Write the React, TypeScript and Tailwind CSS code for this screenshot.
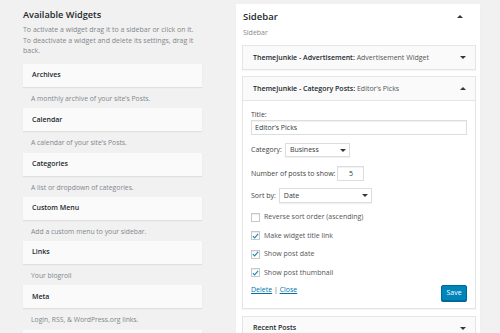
import React from "react";

const widgets = [
  { name: "Archives", desc: "A monthly archive of your site\u2019s Posts." },
  { name: "Calendar", desc: "A calendar of your site\u2019s Posts." },
  { name: "Categories", desc: "A list or dropdown of categories." },
  { name: "Custom Menu", desc: "Add a custom menu to your sidebar." },
  { name: "Links", desc: "Your blogroll" },
  { name: "Meta", desc: "Login, RSS, & WordPress.org links." },
  { name: "Pages", desc: "A list of your site\u2019s Pages." },
];

function Arrow({ up }: { up?: boolean }) {
  return up ? (
    <div className="w-0 h-0 border-l-[3px] border-r-[3px] border-b-[3px] border-l-transparent border-r-transparent border-b-[#32373c]" />
  ) : (
    <div className="w-0 h-0 border-l-[3px] border-r-[3px] border-t-[3px] border-l-transparent border-r-transparent border-t-[#32373c]" />
  );
}

function Check({ checked, label }: { checked?: boolean; label: string }) {
  return (
    <div className="flex items-center h-[18.5px]">
      <div className="w-[9px] h-[9px] border border-[#c8c8c8] bg-white shadow-[inset_0_1px_1px_rgba(0,0,0,0.08)] flex items-center justify-center">
        {checked && (
          <svg width="8" height="8" viewBox="0 0 8 8">
            <path d="M1 4.2 L3 6.2 L7 1.6" fill="none" stroke="#1e8cbe" strokeWidth="1.4" />
          </svg>
        )}
      </div>
      <span className="ml-[4px] text-[7px] leading-[10px] text-[#555]">{label}</span>
    </div>
  );
}

function WidgetHeader({ title, sub, up }: { title: string; sub: string; up?: boolean }) {
  return (
    <div className="h-[23px] flex items-center justify-between pl-[10px] pr-[9px]">
      <div className="text-[7px] leading-[10px] text-[#23282d]">
        <span className="font-semibold">{title}</span>
        {sub && <span className="text-[#555]"> {sub}</span>}
      </div>
      <Arrow up={up} />
    </div>
  );
}

export default function App() {
  return (
    <div
      className="w-[500px] h-[333px] overflow-hidden bg-[#f1f1f1] flex items-start"
      style={{ fontFamily: '"Open Sans", "Liberation Sans", sans-serif' }}
    >
      <div className="ml-[23px] w-[179px] pt-[9px]">
        <h2 className="text-[9.2px] leading-[12px] font-semibold text-[#23282d]">Available Widgets</h2>
        <p className="mt-[4px] text-[7px] leading-[10.5px] text-[#82878c]">
          To activate a widget drag it to a sidebar or click on it.
          <br />
          To deactivate a widget and delete its settings, drag it back.
        </p>
        <div className="mt-[7.5px] flex flex-col">
          {widgets.map((w) => (
            <div key={w.name}>
              <div className="h-[23px] bg-[#fafafa] shadow-[0_1px_1px_rgba(0,0,0,0.07)] flex items-center pl-[9px] text-[7px] font-semibold text-[#23282d]">
                {w.name}
              </div>
              <div className="h-[21.3px] pt-[7px] pl-[8px] text-[6.8px] leading-[10px] text-[#82878c]">{w.desc}</div>
            </div>
          ))}
        </div>
      </div>

      <div className="ml-[34px] mt-[4px] w-[244px] h-[340px] bg-white shadow-[0_1px_1px_rgba(0,0,0,0.06)] pl-[6px] pr-[4px]">
        <div className="flex items-start justify-between pt-[6px] pl-[1px] pr-[13px]">
          <div className="text-[9.5px] leading-[14px] font-semibold text-[#23282d]">Sidebar</div>
          <div className="mt-[4.5px]">
            <Arrow up />
          </div>
        </div>
        <div className="mt-[4px] pl-[1px] text-[7px] leading-[10px] text-[#888]">Sidebar</div>

        <div className="mt-[7px] bg-[#fafafa] border border-[#e5e5e5] shadow-[0_1px_1px_rgba(0,0,0,0.04)]">
          <WidgetHeader title="ThemeJunkie - Advertisement:" sub="Advertisement Widget" />
        </div>

        <div className="mt-[6px] border border-[#e5e5e5] shadow-[0_1px_1px_rgba(0,0,0,0.04)]">
          <div className="bg-[#fafafa] border-b border-[#e5e5e5]">
            <WidgetHeader title="ThemeJunkie - Category Posts:" sub={"Editor\u2019s Picks"} up />
          </div>
          <div className="bg-white pl-[8px] pr-[8px] pt-[9px] pb-[7px] text-[7px] text-[#444]">
            <div className="leading-[10px]">Title:</div>
            <div className="h-[15px] border border-[#ddd] shadow-[inset_0_1px_1px_rgba(0,0,0,0.06)] flex items-center pl-[3px] leading-[10px] text-[#32373c]">
              Editor’s Picks
            </div>

            <div className="mt-[8px] flex items-center h-[14px]">
              <span className="leading-[10px]">Category:</span>
              <div className="ml-[3px] w-[65px] h-[14px] border border-[#ddd] shadow-[0_1px_1px_rgba(0,0,0,0.05)] flex items-center justify-between pl-[4px] pr-[3px] text-[#32373c]">
                <span className="leading-[10px]">Business</span>
                <Arrow />
              </div>
            </div>

            <div className="mt-[9px] flex items-center h-[15px]">
              <span className="leading-[10px]">Number of posts to show:</span>
              <div className="ml-[2px] w-[27px] h-[15px] border border-[#ddd] shadow-[inset_0_1px_1px_rgba(0,0,0,0.06)] flex items-center justify-center leading-[10px] text-[#32373c]">
                5
              </div>
            </div>

            <div className="mt-[7px] flex items-center h-[15px]">
              <span className="leading-[10px]">Sort by:</span>
              <div className="ml-[3px] w-[93px] h-[15px] border border-[#ddd] shadow-[0_1px_1px_rgba(0,0,0,0.05)] flex items-center justify-between pl-[4px] pr-[3px] text-[#32373c]">
                <span className="leading-[10px]">Date</span>
                <Arrow />
              </div>
            </div>

            <div className="mt-[5px]">
              <Check label="Reverse sort order (ascending)" />
              <Check checked label="Make widget title link" />
              <Check checked label="Show post date" />
              <Check checked label="Show post thumbnail" />
            </div>

            <div className="flex items-start justify-between">
              <div className="mt-[2.5px] leading-[10px] text-[#0073aa]">
                <span className="underline">Delete</span>
                <span className="text-[#555]"> | </span>
                <span className="underline">Close</span>
              </div>
              <button className="mt-[2.5px] w-[26px] h-[16px] bg-[#0085ba] border border-[#006799] rounded-[2px] shadow-[0_1px_0_#006799] text-white text-[7px] leading-[10px]">
                Save
              </button>
            </div>
          </div>
        </div>

        <div className="mt-[7px] bg-[#fafafa] border border-[#e5e5e5] shadow-[0_1px_1px_rgba(0,0,0,0.04)]">
          <WidgetHeader title="Recent Posts" sub="" />
        </div>
      </div>
    </div>
  );
}
